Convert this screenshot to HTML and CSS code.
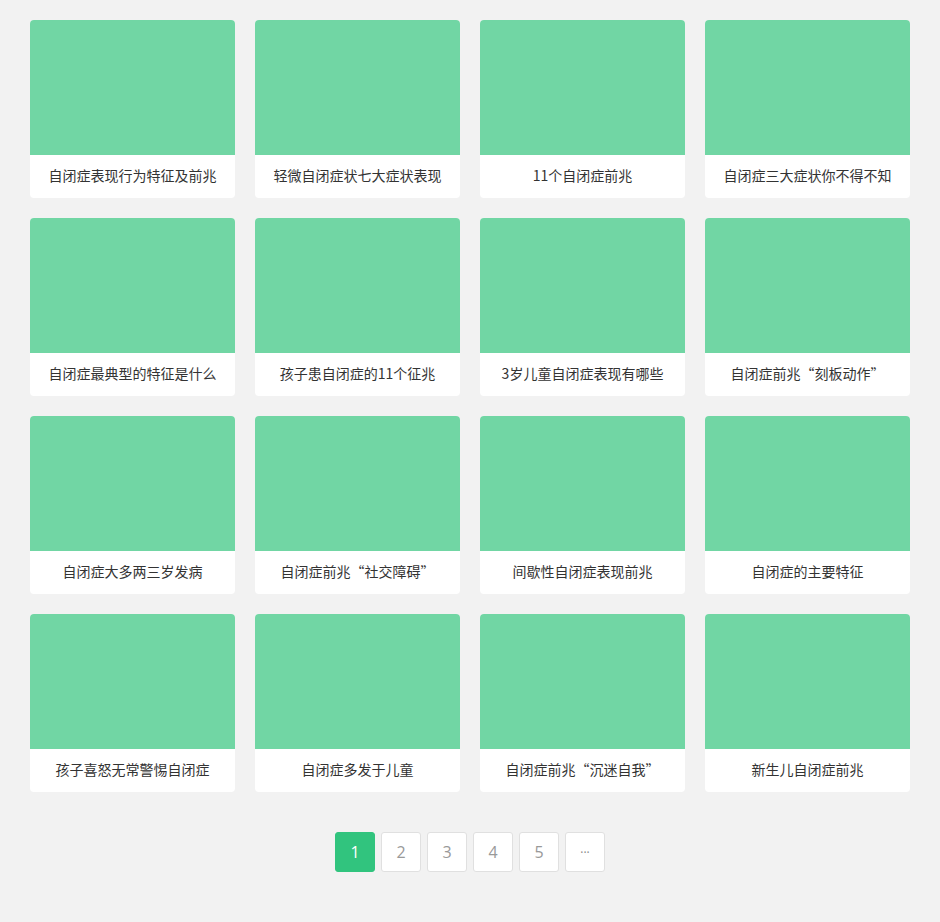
FILE: index.html
```
<!DOCTYPE html>
<html lang="zh">
<head>
<meta charset="utf-8">
<link rel="stylesheet" href="styles.css">
</head>
<body>
<div class="grid">
  <div class="card"><div class="thumb"></div><div class="cap">自闭症表现行为特征及前兆</div></div>
  <div class="card"><div class="thumb"></div><div class="cap">轻微自闭症状七大症状表现</div></div>
  <div class="card"><div class="thumb"></div><div class="cap">11个自闭症前兆</div></div>
  <div class="card"><div class="thumb"></div><div class="cap">自闭症三大症状你不得不知</div></div>
  <div class="card"><div class="thumb"></div><div class="cap">自闭症最典型的特征是什么</div></div>
  <div class="card"><div class="thumb"></div><div class="cap">孩子患自闭症的11个征兆</div></div>
  <div class="card"><div class="thumb"></div><div class="cap">3岁儿童自闭症表现有哪些</div></div>
  <div class="card"><div class="thumb"></div><div class="cap">自闭症前兆“刻板动作”</div></div>
  <div class="card"><div class="thumb"></div><div class="cap">自闭症大多两三岁发病</div></div>
  <div class="card"><div class="thumb"></div><div class="cap">自闭症前兆“社交障碍”</div></div>
  <div class="card"><div class="thumb"></div><div class="cap">间歇性自闭症表现前兆</div></div>
  <div class="card"><div class="thumb"></div><div class="cap">自闭症的主要特征</div></div>
  <div class="card"><div class="thumb"></div><div class="cap">孩子喜怒无常警惕自闭症</div></div>
  <div class="card"><div class="thumb"></div><div class="cap">自闭症多发于儿童</div></div>
  <div class="card"><div class="thumb"></div><div class="cap">自闭症前兆“沉迷自我”</div></div>
  <div class="card"><div class="thumb"></div><div class="cap">新生儿自闭症前兆</div></div>
</div>
<div class="pager">
  <span class="pg active">1</span>
  <span class="pg">2</span>
  <span class="pg">3</span>
  <span class="pg">4</span>
  <span class="pg">5</span>
  <span class="pg more">···</span>
</div>
</body>
</html>
```
FILE: styles.css
```
html, body {
  margin: 0;
  padding: 0;
  background: #f2f2f2;
}
body {
  font-family: "Noto Sans CJK SC", "Noto Sans", sans-serif;
  color: #333;
}
.grid {
  display: grid;
  grid-template-columns: repeat(4, 205px);
  column-gap: 20px;
  row-gap: 20px;
  padding: 20px 30px 0;
}
.card {
  background: #fff;
  border-radius: 4px;
  overflow: hidden;
  height: 178px;
  display: flex;
  flex-direction: column;
}
.thumb {
  height: 135px;
  background: #71d6a4;
}
.cap {
  flex: 1;
  display: flex;
  align-items: center;
  justify-content: center;
  font-size: 14px;
  color: #333;
  padding-bottom: 3px;
}
.pager {
  display: flex;
  justify-content: center;
  gap: 6px;
  margin-top: 40px;
}
.pg {
  width: 38px;
  height: 38px;
  border: 1px solid #e0e0e0;
  border-radius: 3px;
  background: #fff;
  color: #999;
  font-family: "Open Sans", "Noto Sans", sans-serif;
  font-size: 16px;
  display: flex;
  align-items: center;
  justify-content: center;
}
.pg.active {
  background: #31c47e;
  border-color: #31c47e;
  color: #fff;
}
.pg.more {
  font-size: 12px;
  color: #888;
}
```
